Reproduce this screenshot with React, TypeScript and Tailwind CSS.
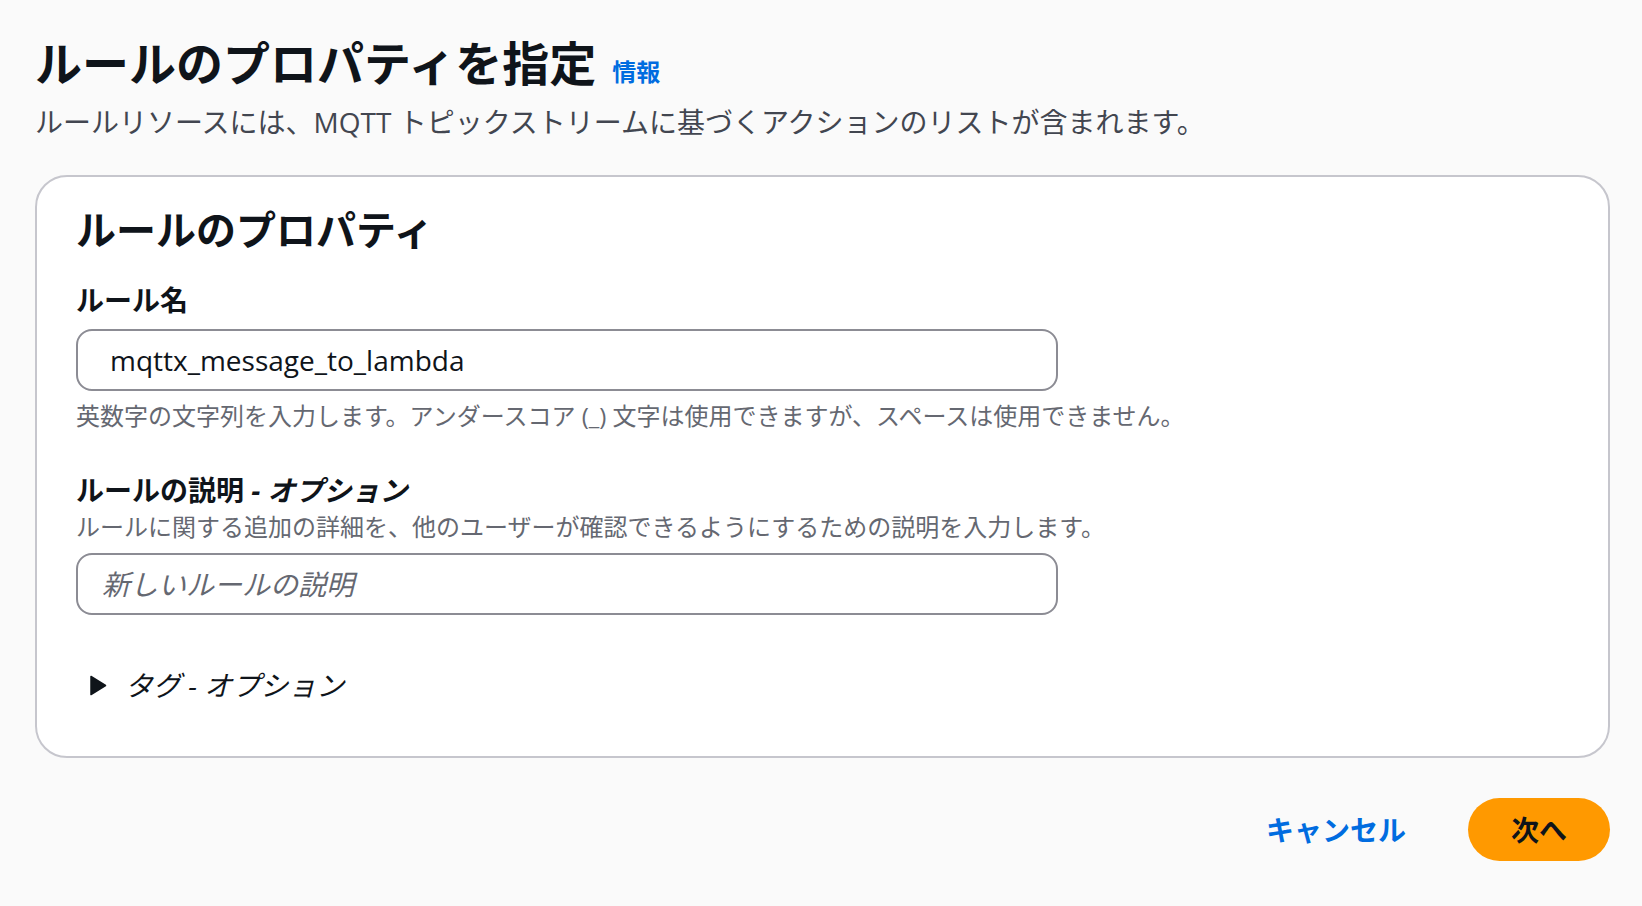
const Field = ({ label, optional, help, children }: { label: string; optional?: boolean; help?: string; children: React.ReactNode }) => (
  <div className="flex flex-col">
    <label className="text-[28px] leading-[36px] font-bold text-[#0f141a]">
      {label}
      {optional && <span className="italic"> - オプション</span>}
    </label>
    {help && <p className="mt-[3px] text-[24px] leading-[32px] text-[#656871]">{help}</p>}
    {children}
  </div>
);

const App = () => {
  return (
    <div className="min-h-screen bg-[#fafafa] pl-[35px] pr-[32px] pt-[33px] font-['Open_Sans','Noto_Sans_CJK_JP',sans-serif] text-[#0f141a]">
      {/* HEADER */}
      <div className="flex items-baseline gap-[16px]">
        <h1 className="text-[47px] leading-[60px] font-bold">ルールのプロパティを指定</h1>
        <a className="text-[24px] font-bold text-[#006ce0]">情報</a>
      </div>
      <p className="mt-[11px] text-[28px] leading-[36px] text-[#424650]">
        ルールリソースには、MQTT トピックストリームに基づくアクションのリストが含まれます。
      </p>

      {/* CARD */}
      <section className="mt-[35px] rounded-[32px] border-2 border-[#c6c6cd] bg-white pl-[39px] pr-[39px] pt-[29px] pb-[53px]">
        <h2 className="text-[40px] leading-[48px] font-bold">ルールのプロパティ</h2>

        <div className="mt-[28px]">
          <Field label="ルール名">
            <div className="mt-[11px] flex h-[62px] w-[982px] items-center rounded-[16px] border-2 border-[#8c8c94] bg-white px-[32px] text-[28px]">
              mqttx_message_to_lambda
            </div>
            <p className="mt-[9px] text-[24px] leading-[32px] text-[#656871]">
              英数字の文字列を入力します。アンダースコア (_) 文字は使用できますが、スペースは使用できません。
            </p>
          </Field>
        </div>

        <div className="mt-[40px]">
          <Field
            label="ルールの説明"
            optional
            help="ルールに関する追加の詳細を、他のユーザーが確認できるようにするための説明を入力します。"
          >
            <div className="mt-[10px] flex h-[62px] w-[982px] items-center rounded-[16px] border-2 border-[#8c8c94] bg-white px-[24px] text-[28px] italic text-[#656871]">
              新しいルールの説明
            </div>
          </Field>
        </div>

        <div className="mt-[52px] flex items-center gap-[18px] pl-[13px] text-[28px] leading-[36px] italic">
          <svg width="18" height="21" viewBox="0 0 18 21">
            <path d="M2 1.5 L16.5 10.5 L2 19.5 Z" fill="#0f141a" stroke="#0f141a" strokeWidth="1.5" strokeLinejoin="round" />
          </svg>
          <span>タグ - オプション</span>
        </div>
      </section>

      {/* FOOTER */}
      <div className="mt-[40px] flex items-center justify-end gap-[62px]">
        <button className="text-[28px] font-bold text-[#006ce0]">キャンセル</button>
        <button className="flex h-[63px] w-[142px] items-center justify-center rounded-full bg-[#ff9900] text-[28px] font-bold text-[#0f141a]">
          次へ
        </button>
      </div>
    </div>
  );
};

export default App;
